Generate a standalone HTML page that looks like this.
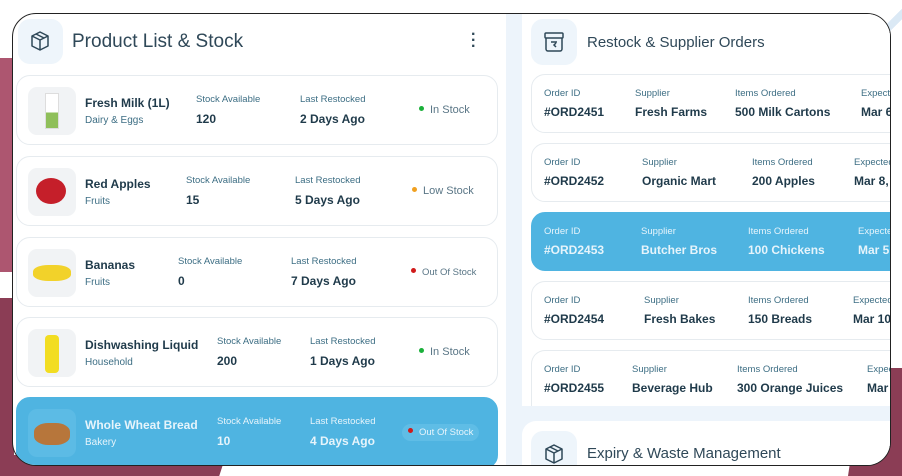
<!DOCTYPE html>
<html><head><meta charset="utf-8"><style>
*{box-sizing:border-box;margin:0;padding:0}
body{width:902px;height:476px;overflow:hidden;background:#fff;position:relative;font-family:"Liberation Sans",sans-serif;color:#1f3a4a}
.abs{position:absolute}
.frame{position:absolute;left:12px;top:13px;width:879px;height:453px;border:1.5px solid #222;border-radius:24px;overflow:hidden;background:#fff}
.card{position:absolute;left:3px;width:482px;height:70px;border:1px solid #e6ebef;border-radius:14px;background:#fff}
.img{position:absolute;left:11px;top:11px;width:48px;height:48px;border-radius:9px;background:#f1f3f5;overflow:hidden}
.t{position:absolute;white-space:nowrap}
.nm{font-size:12px;font-weight:bold;top:20px;color:#1f3a4a}
.ct{font-size:10px;top:39px;color:#3d6e84}
.lb{font-size:9.5px;top:18px;color:#3d6e84}
.vl{font-size:12px;font-weight:bold;top:36px;color:#1f3a4a}
.st{font-size:11px;top:28px;color:#5a7686}
.dot{display:inline-block;width:5px;height:5px;border-radius:50%;margin-right:6px;vertical-align:2px}
.oc{position:absolute;left:9px;width:380px;height:59px;border:1px solid #e6ebef;border-radius:14px;background:#fff}
.oc .lb{top:13px}.oc .vl{top:30px}
.card.blue,.oc.blue{background:#4fb4e1;border-color:#4fb4e1}
.blue .t{color:#e6f4fb}
</style></head><body>
<div class="abs" style="left:0;top:58px;width:14px;height:214px;background:#ad5670"></div>
<div class="abs" style="left:0;top:298px;width:14px;height:178px;background:#8b3d55"></div>
<div class="abs" style="left:0;top:455px;width:226px;height:21px;background:#8b3d55;clip-path:polygon(0 0,100% 0,97% 100%,0 100%)"></div>
<div class="abs" style="left:848px;top:368px;width:54px;height:108px;background:#8b3d55;clip-path:polygon(30% 0,100% 0,100% 100%,0 100%)"></div>
<div class="abs" style="left:790px;top:0;width:112px;height:140px;background:linear-gradient(135deg,transparent 48%,#dbe9f5 48%,#dbe9f5 52%,transparent 52%)"></div>
<div class="frame">
 <div class="abs" style="left:5px;top:5px;width:45px;height:45px;border-radius:12px;background:#eef5fb"></div>
 <svg class="abs" style="left:15px;top:15px" width="24" height="24" viewBox="0 0 24 24" fill="none" stroke="#2f4858" stroke-width="1.5" stroke-linejoin="round"><path d="M12 3l8 4v10l-8 4-8-4V7z"/><path d="M4 7l8 4 8-4M12 11v10M8 5l8 4"/></svg>
 <div class="t" style="left:59px;top:17px;font-size:19px;color:#2f4858">Product List &amp; Stock</div>
 <div class="t" style="left:458px;top:18px;font-size:16px;font-weight:bold;color:#2f4858;line-height:6px">·<br>·<br>·</div>

 <div class="card" style="top:61px"><div class="img"><div style="margin:6px 17px;width:14px;height:36px;background:linear-gradient(#fff 55%,#8fbf5a 55%);border:1px solid #ddd"></div></div>
  <div class="t nm" style="left:68px">Fresh Milk (1L)</div><div class="t ct" style="left:68px">Dairy &amp; Eggs</div>
  <div class="t lb" style="left:179px">Stock Available</div><div class="t vl" style="left:179px">120</div>
  <div class="t lb" style="left:283px">Last Restocked</div><div class="t vl" style="left:283px">2 Days Ago</div>
  <div class="t st" style="left:402px"><span class="dot" style="background:#1ab03a"></span>In Stock</div></div>

 <div class="card" style="top:142px"><div class="img"><div style="margin:10px 8px;width:30px;height:26px;border-radius:50%;background:#c51f2a"></div></div>
  <div class="t nm" style="left:68px">Red Apples</div><div class="t ct" style="left:68px">Fruits</div>
  <div class="t lb" style="left:169px">Stock Available</div><div class="t vl" style="left:169px">15</div>
  <div class="t lb" style="left:278px">Last Restocked</div><div class="t vl" style="left:278px">5 Days Ago</div>
  <div class="t st" style="left:395px"><span class="dot" style="background:#f0a020"></span>Low Stock</div></div>

 <div class="card" style="top:223px"><div class="img"><div style="margin:16px 5px;width:38px;height:16px;border-radius:40%;background:#f2d22a"></div></div>
  <div class="t nm" style="left:68px">Bananas</div><div class="t ct" style="left:68px">Fruits</div>
  <div class="t lb" style="left:161px">Stock Available</div><div class="t vl" style="left:161px">0</div>
  <div class="t lb" style="left:274px">Last Restocked</div><div class="t vl" style="left:274px">7 Days Ago</div>
  <div class="t st" style="left:394px;font-size:9.5px;top:29px"><span class="dot" style="background:#d01a1a"></span>Out Of Stock</div></div>

 <div class="card" style="top:303px"><div class="img"><div style="margin:6px 17px;width:14px;height:38px;border-radius:4px;background:#f2dd22"></div></div>
  <div class="t nm" style="left:68px">Dishwashing Liquid</div><div class="t ct" style="left:68px">Household</div>
  <div class="t lb" style="left:200px">Stock Available</div><div class="t vl" style="left:200px">200</div>
  <div class="t lb" style="left:293px">Last Restocked</div><div class="t vl" style="left:293px">1 Days Ago</div>
  <div class="t st" style="left:402px"><span class="dot" style="background:#1ab03a"></span>In Stock</div></div>

 <div class="card blue" style="top:383px;height:72px"><div class="img" style="background:#5cbbe5"><div style="margin:14px 6px;width:36px;height:22px;border-radius:40%;background:#b7763b"></div></div>
  <div class="t nm" style="left:68px">Whole Wheat Bread</div><div class="t ct" style="left:68px">Bakery</div>
  <div class="t lb" style="left:200px">Stock Available</div><div class="t vl" style="left:200px">10</div>
  <div class="t lb" style="left:293px">Last Restocked</div><div class="t vl" style="left:293px">4 Days Ago</div>
  <div class="t st" style="left:385px;top:26px;font-size:9.5px;background:#5fbde6;padding:3px 6px;border-radius:10px"><span class="dot" style="background:#d01a1a"></span>Out Of Stock</div></div>

 <div class="abs" style="left:493px;top:0;width:400px;height:453px;background:#edf4fb"></div>
 <div class="abs" style="left:509px;top:0;width:380px;height:392px;background:#fff"></div>
 <div class="abs" style="left:509px;top:407px;width:380px;height:60px;background:#fff;border-radius:14px 0 0 0"></div>
 <div class="abs" style="left:518px;top:5px;width:46px;height:46px;border-radius:12px;background:#eef5fb"></div>
 <svg class="abs" style="left:529px;top:16px" width="24" height="24" viewBox="0 0 24 24" fill="none" stroke="#2f4858" stroke-width="1.5"><rect x="3" y="3" width="18" height="5" rx="1"/><path d="M4 8v11a2 2 0 002 2h12a2 2 0 002-2V8M9 12h6M14 17l-2-2 2-2"/></svg>
 <div class="t" style="left:574px;top:20px;font-size:15px;color:#2f4858">Restock &amp; Supplier Orders</div>
 <div class="abs" style="left:509px;top:0">
  <div class="oc" style="top:60px"><div class="t lb" style="left:12px">Order ID</div><div class="t vl" style="left:12px">#ORD2451</div><div class="t lb" style="left:103px">Supplier</div><div class="t vl" style="left:103px">Fresh Farms</div><div class="t lb" style="left:203px">Items Ordered</div><div class="t vl" style="left:203px">500 Milk Cartons</div><div class="t lb" style="left:329px">Expected</div><div class="t vl" style="left:329px">Mar 6, 2025</div></div>
  <div class="oc" style="top:129px"><div class="t lb" style="left:12px">Order ID</div><div class="t vl" style="left:12px">#ORD2452</div><div class="t lb" style="left:110px">Supplier</div><div class="t vl" style="left:110px">Organic Mart</div><div class="t lb" style="left:220px">Items Ordered</div><div class="t vl" style="left:220px">200 Apples</div><div class="t lb" style="left:322px">Expected</div><div class="t vl" style="left:322px">Mar 8, 2025</div></div>
  <div class="oc blue" style="top:198px"><div class="t lb" style="left:12px">Order ID</div><div class="t vl" style="left:12px">#ORD2453</div><div class="t lb" style="left:109px">Supplier</div><div class="t vl" style="left:109px">Butcher Bros</div><div class="t lb" style="left:216px">Items Ordered</div><div class="t vl" style="left:216px">100 Chickens</div><div class="t lb" style="left:326px">Expected</div><div class="t vl" style="left:326px">Mar 5, 2025</div></div>
  <div class="oc" style="top:267px"><div class="t lb" style="left:12px">Order ID</div><div class="t vl" style="left:12px">#ORD2454</div><div class="t lb" style="left:112px">Supplier</div><div class="t vl" style="left:112px">Fresh Bakes</div><div class="t lb" style="left:216px">Items Ordered</div><div class="t vl" style="left:216px">150 Breads</div><div class="t lb" style="left:321px">Expected</div><div class="t vl" style="left:321px">Mar 10, 2025</div></div>
  <div class="oc" style="top:336px;height:56px;border-bottom:none;border-radius:14px 14px 0 0"><div class="t lb" style="left:12px">Order ID</div><div class="t vl" style="left:12px">#ORD2455</div><div class="t lb" style="left:100px">Supplier</div><div class="t vl" style="left:100px">Beverage Hub</div><div class="t lb" style="left:205px">Items Ordered</div><div class="t vl" style="left:205px">300 Orange Juices</div><div class="t lb" style="left:335px">Expected</div><div class="t vl" style="left:335px">Mar 12</div></div>
 </div>
 <div class="abs" style="left:518px;top:417px;width:46px;height:46px;border-radius:12px;background:#eef5fb"></div>
 <svg class="abs" style="left:529px;top:428px" width="24" height="24" viewBox="0 0 24 24" fill="none" stroke="#2f4858" stroke-width="1.5" stroke-linejoin="round"><path d="M12 3l8 4v10l-8 4-8-4V7z"/><path d="M4 7l8 4 8-4M12 11v10M8 5l8 4"/></svg>
 <div class="t" style="left:574px;top:431px;font-size:15px;color:#2f4858">Expiry &amp; Waste Management</div>
</div>
</body></html>
